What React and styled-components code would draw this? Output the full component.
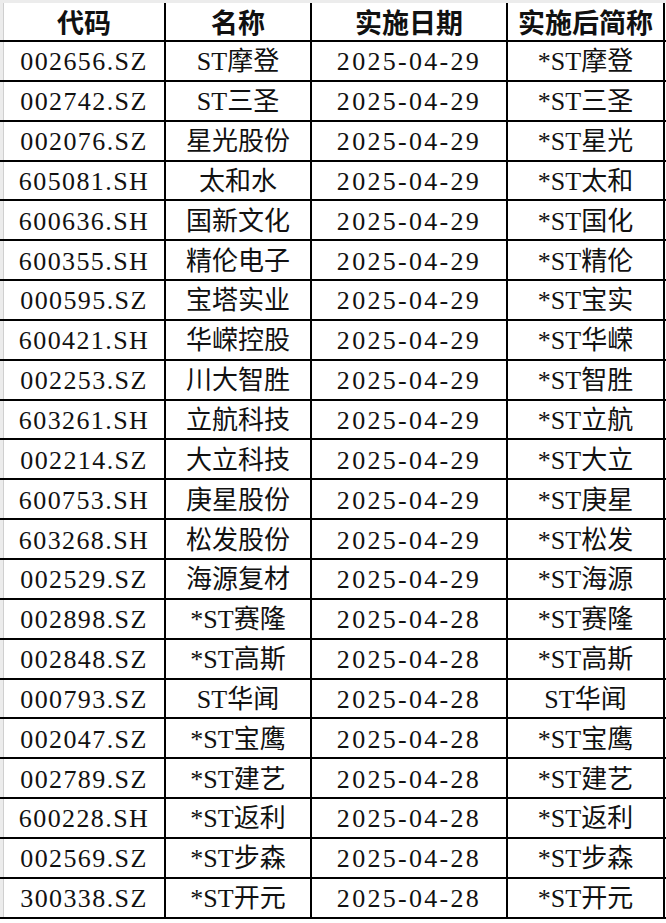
import styled, { createGlobalStyle } from "styled-components";

const GlobalStyle = createGlobalStyle`
	html, body {
		margin: 0;
		padding: 0;
		background: #fff;
	}
	*, *::before, *::after {
		box-sizing: border-box;
	}
`;

const rows = [
	["002656.SZ", "ST摩登", "2025-04-29", "*ST摩登"],
	["002742.SZ", "ST三圣", "2025-04-29", "*ST三圣"],
	["002076.SZ", "星光股份", "2025-04-29", "*ST星光"],
	["605081.SH", "太和水", "2025-04-29", "*ST太和"],
	["600636.SH", "国新文化", "2025-04-29", "*ST国化"],
	["600355.SH", "精伦电子", "2025-04-29", "*ST精伦"],
	["000595.SZ", "宝塔实业", "2025-04-29", "*ST宝实"],
	["600421.SH", "华嵘控股", "2025-04-29", "*ST华嵘"],
	["002253.SZ", "川大智胜", "2025-04-29", "*ST智胜"],
	["603261.SH", "立航科技", "2025-04-29", "*ST立航"],
	["002214.SZ", "大立科技", "2025-04-29", "*ST大立"],
	["600753.SH", "庚星股份", "2025-04-29", "*ST庚星"],
	["603268.SH", "松发股份", "2025-04-29", "*ST松发"],
	["002529.SZ", "海源复材", "2025-04-29", "*ST海源"],
	["002898.SZ", "*ST赛隆", "2025-04-28", "*ST赛隆"],
	["002848.SZ", "*ST高斯", "2025-04-28", "*ST高斯"],
	["000793.SZ", "ST华闻", "2025-04-28", "ST华闻"],
	["002047.SZ", "*ST宝鹰", "2025-04-28", "*ST宝鹰"],
	["002789.SZ", "*ST建艺", "2025-04-28", "*ST建艺"],
	["600228.SH", "*ST返利", "2025-04-28", "*ST返利"],
	["002569.SZ", "*ST步森", "2025-04-28", "*ST步森"],
	["300338.SZ", "*ST开元", "2025-04-28", "*ST开元"],
];

const widths = [162, 146, 196, 157];

const Sheet = styled.div`
	width: 666px;
	padding-top: 3px;
	background: #ececec;
`;

const Row = styled.div`
	display: grid;
	grid-template-columns: ${widths.map((w) => `${w}px`).join(" ")};
	height: ${(p) => p.$h}px;
	padding-left: 4px;
	border-bottom: 2px solid #000;
	background: linear-gradient(
		to right,
		#ececec 3px,
		#cfcfcf 3px,
		#cfcfcf 4px,
		#fff 4px
	);
`;

const Cell = styled.div`
	display: flex;
	align-items: center;
	justify-content: center;
	border-right: 2px solid #000;
	color: #111;
	white-space: nowrap;
	font-family: "Liberation Serif", "Noto Sans CJK SC", serif;
	font-size: 26px;
	line-height: 26px;
	font-weight: 400;
	letter-spacing: ${(p) => p.$spacing || 0}px;
	padding-top: 3px;
`;

const HeadCell = styled(Cell)`
	font-family: "Noto Sans CJK SC", sans-serif;
	font-size: 27px;
	font-weight: 700;
	letter-spacing: 0;
	padding-top: 0;
`;

const headers = ["代码", "名称", "实施日期", "实施后简称"];
const spacing = [1.4, 0, 2.3, 0];

const App = () => {
	return (
		<>
			<GlobalStyle />
			<Sheet>
				<Row $h={39}>
					{headers.map((h) => (
						<HeadCell key={h}>{h}</HeadCell>
					))}
				</Row>
				{rows.map((r) => (
					<Row key={r[0]} $h={39.85}>
						{r.map((v, i) => (
							<Cell key={i} $spacing={spacing[i]}>
								{v}
							</Cell>
						))}
					</Row>
				))}
			</Sheet>
		</>
	);
};

export default App;
